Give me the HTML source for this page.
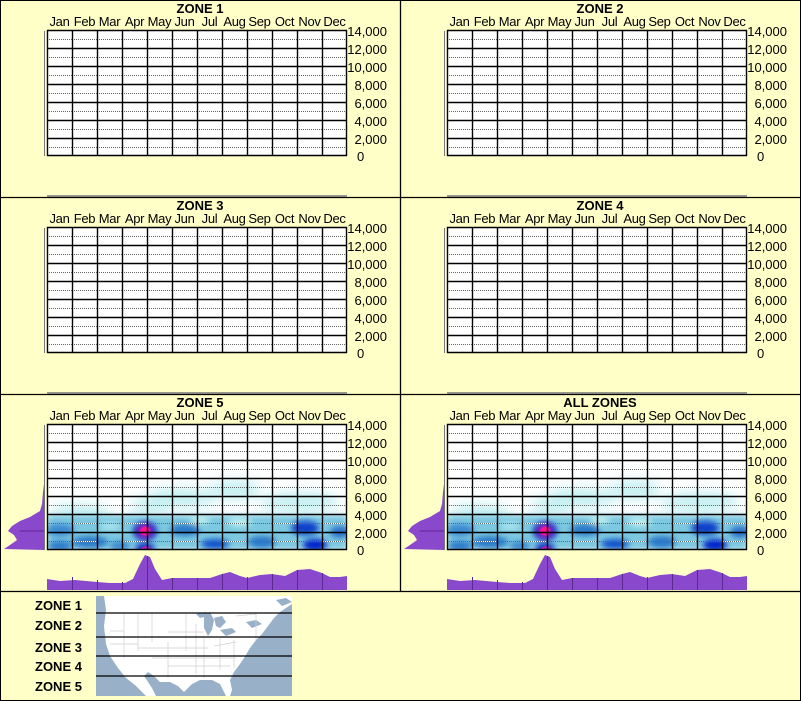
<!DOCTYPE html>
<html><head><meta charset="utf-8"><style>
body{margin:0;width:801px;height:701px;background:#ffffc8;position:relative;overflow:hidden;font-family:"Liberation Sans",Arial,sans-serif}
.p{position:absolute;width:400px;height:197px;box-sizing:border-box}
.t{position:absolute;left:0;width:400px;top:1px;text-align:center;font-weight:bold;font-size:13px;color:#000}
.m{position:absolute;top:14px;font-size:13px;color:#000;width:25px;text-align:center;white-space:nowrap;letter-spacing:-0.3px}
.y{position:absolute;left:338px;width:49px;text-align:right;font-size:13px;color:#000;line-height:13px}
svg{position:absolute;left:0;top:0}
.z{position:absolute;left:35px;font-weight:bold;font-size:13px}
</style></head><body>
<svg width="801" height="701" style="z-index:0">
<defs>
<pattern id="g" x="47" y="30" width="25" height="18" patternUnits="userSpaceOnUse">
<line x1="0" y1="9.5" x2="25" y2="9.5" stroke="#666" stroke-width="1" stroke-dasharray="1,1"/>
</pattern>
<filter id="bl" x="-50%" y="-50%" width="200%" height="200%"><feGaussianBlur stdDeviation="3"/></filter>
<filter id="bl2" x="-50%" y="-50%" width="200%" height="200%"><feGaussianBlur stdDeviation="6"/></filter>
<clipPath id="cl"><rect x="47" y="30" width="300" height="126"/></clipPath>
<g id="grid">
<rect x="47" y="30" width="300" height="126" fill="#fff"/>
</g>
<g id="lines">
<rect x="47" y="30" width="300" height="126" fill="url(#g)"/>
<path d="M47.5 30V156M72.5 30V156M97.5 30V156M122.5 30V156M147.5 30V156M172.5 30V156M197.5 30V156M222.5 30V156M247.5 30V156M272.5 30V156M297.5 30V156M322.5 30V156M346.5 30V156M47 30.5H347M47 48.5H347M47 66.5H347M47 84.5H347M47 102.5H347M47 120.5H347M47 138.5H347M47 155.5H347" stroke="#000" stroke-width="1.4" fill="none"/>
<line x1="44.5" y1="31" x2="44.5" y2="156" stroke="#777" stroke-width="1"/>
</g>
<g id="heat">
<g clip-path="url(#cl)">
<g filter="url(#bl2)" fill="#bdeef0" opacity="0.9">
<ellipse cx="80" cy="118" rx="30" ry="8"/><ellipse cx="180" cy="104" rx="35" ry="10"/><ellipse cx="235" cy="96" rx="25" ry="10"/><ellipse cx="300" cy="108" rx="40" ry="10"/><ellipse cx="150" cy="112" rx="20" ry="8"/>
</g>
<rect x="47" y="121" width="300" height="35" fill="#7cc8e0" filter="url(#bl)"/>
<g filter="url(#bl)">
<ellipse cx="60" cy="136" rx="14" ry="6" fill="#3a88d0"/>
<ellipse cx="90" cy="148" rx="18" ry="6" fill="#2a78c8"/>
<ellipse cx="60" cy="152" rx="12" ry="5" fill="#2a78c8"/>
<ellipse cx="120" cy="152" rx="10" ry="5" fill="#3a88d0"/>
<ellipse cx="145" cy="137" rx="12" ry="9" fill="#1030c0"/>
<ellipse cx="145" cy="154" rx="10" ry="5" fill="#1030c0"/>
<ellipse cx="185" cy="136" rx="15" ry="6" fill="#2a78c8"/>
<ellipse cx="215" cy="150" rx="14" ry="5" fill="#1050c8"/>
<ellipse cx="240" cy="128" rx="12" ry="5" fill="#b8eef0"/>
<ellipse cx="262" cy="148" rx="14" ry="6" fill="#2a78c8"/>
<ellipse cx="305" cy="134" rx="14" ry="7" fill="#0840c8"/>
<ellipse cx="315" cy="151" rx="12" ry="6" fill="#0020c8"/>
<ellipse cx="340" cy="138" rx="10" ry="6" fill="#2a70c8"/>
<ellipse cx="200" cy="126" rx="10" ry="4" fill="#c0f0f0"/>
<ellipse cx="110" cy="132" rx="10" ry="4" fill="#a8e4ec"/>
</g>
<ellipse cx="145" cy="137" rx="8" ry="7" fill="#a020c0" filter="url(#bl)"/>
<ellipse cx="145" cy="137" rx="5" ry="4.5" fill="#ff1090"/>
<ellipse cx="146" cy="155" rx="5" ry="3" fill="#b020c0"/>
<path d="M47 129.5H347M47 147.5H347" stroke="#fff" stroke-width="1" stroke-dasharray="1,1"/>
</g>
<polygon fill="#8a48cc" points="44,90 43,98 42,110 40,117 30,123 20,127 12,132 8,137 14,141 17,146 10,151 4,155 44,156"/>
<polygon fill="#8a48cc" points="47,196 47,185 60,187 75,186 97,188 110,189 125,189 133,185 140,170 145,161 150,163 155,175 162,186 172,184 197,184 210,184 222,180 230,178 240,182 247,184 260,181 272,180 285,182 297,176 310,175 322,179 330,183 340,183 347,182 347,196"/>
<path d="M72.5 183V196M97.5 186V196M122.5 188V196M147.5 162V196M172.5 184V196M197.5 184V196M222.5 180V196M247.5 183V196M272.5 180V196M297.5 176V196M322.5 179V196M19.5 137H44" stroke="#5a2a90" stroke-width="1"/>
</g>
</defs>
<rect x="0.5" y="0.5" width="800" height="700" fill="none" stroke="#000"/>
<path d="M400.5 0V591M0 197.5H801M0 394.5H801M0 591.5H801" stroke="#000" stroke-width="1.3"/>
<g><use href="#grid"/><use href="#lines"/><line x1="47" y1="196" x2="347" y2="196" stroke="#777" stroke-width="1.5"/></g>
<g transform="translate(400,0)"><use href="#grid"/><use href="#lines"/><line x1="47" y1="196" x2="347" y2="196" stroke="#777" stroke-width="1.5"/></g>
<g transform="translate(0,197)"><use href="#grid"/><use href="#lines"/><line x1="47" y1="196" x2="347" y2="196" stroke="#777" stroke-width="1.5"/></g>
<g transform="translate(400,197)"><use href="#grid"/><use href="#lines"/><line x1="47" y1="196" x2="347" y2="196" stroke="#777" stroke-width="1.5"/></g>
<g transform="translate(0,394)"><use href="#grid"/><use href="#heat"/><use href="#lines"/></g>
<g transform="translate(400,394)"><use href="#grid"/><use href="#heat"/><use href="#lines"/></g>
<g transform="translate(96,596)">
<rect width="196" height="100" fill="#98b0c8"/>
<path fill="#fff" d="M8,0 L196,0 L196,8 L190,12 L184,16 L178,22 L172,30 L166,38 L160,44 L154,52 L148,62 L144,68 L138,76 L134,84 L136,94 L134,100 L130,100 L124,88 L116,84 L104,84 L96,88 L88,96 L82,90 L74,86 L64,86 L58,80 L52,76 L48,80 L56,92 L60,100 L50,100 L40,90 L30,82 L22,72 L14,60 L10,48 L8,30 L10,14 Z"/>
<path fill="#98b0c8" d="M108,18 L114,16 L118,24 L116,34 L112,40 L108,32 Z M118,22 L126,20 L130,26 L124,32 L120,30 Z M124,34 L136,32 L140,36 L130,40 Z M100,18 L110,16 L112,20 L104,22 Z M150,26 L160,24 L166,28 L156,32 Z M180,4 L190,2 L196,6 L186,10 Z"/>
<path fill="none" stroke="#d0d0d0" stroke-width="0.7" d="M10,17H110M28,17V62M42,17V55M56,17V46M72,46V82M90,17V55M100,28V78M72,36H108M42,52H112M56,62H140M72,70H134M108,42V82M124,42V74M138,44V72M118,50L140,46M14,35H28M14,48H42M140,20L160,18V44"/>
<path d="M0,17H196M0,41H196M0,60H196M0,80H196" stroke="#000" stroke-width="1.3"/>
</g>
</svg>

<div class="p" style="left:0;top:0"><div class="t">ZONE 1</div></div>
<div class="p" style="left:400px;top:0"><div class="t">ZONE 2</div></div>
<div class="p" style="left:0;top:197px"><div class="t">ZONE 3</div></div>
<div class="p" style="left:400px;top:197px"><div class="t">ZONE 4</div></div>
<div class="p" style="left:0;top:394px"><div class="t">ZONE 5</div></div>
<div class="p" style="left:400px;top:394px"><div class="t">ALL ZONES</div></div>

<div class="p" style="left:0;top:0"><div class="m" style="left:47px">Jan</div><div class="m" style="left:72px">Feb</div><div class="m" style="left:97px">Mar</div><div class="m" style="left:122px">Apr</div><div class="m" style="left:147px">May</div><div class="m" style="left:172px">Jun</div><div class="m" style="left:197px">Jul</div><div class="m" style="left:222px">Aug</div><div class="m" style="left:247px">Sep</div><div class="m" style="left:272px">Oct</div><div class="m" style="left:297px">Nov</div><div class="m" style="left:322px">Dec</div><div class="y" style="top:25px">14,000</div><div class="y" style="top:43px">12,000</div><div class="y" style="top:61px">10,000</div><div class="y" style="top:79px">8,000</div><div class="y" style="top:97px">6,000</div><div class="y" style="top:115px">4,000</div><div class="y" style="top:133px">2,000</div><div class="y" style="top:150px;left:350px;width:auto;text-align:left;padding-left:7px">0</div></div>
<div class="p" style="left:400px;top:0"><div class="m" style="left:47px">Jan</div><div class="m" style="left:72px">Feb</div><div class="m" style="left:97px">Mar</div><div class="m" style="left:122px">Apr</div><div class="m" style="left:147px">May</div><div class="m" style="left:172px">Jun</div><div class="m" style="left:197px">Jul</div><div class="m" style="left:222px">Aug</div><div class="m" style="left:247px">Sep</div><div class="m" style="left:272px">Oct</div><div class="m" style="left:297px">Nov</div><div class="m" style="left:322px">Dec</div><div class="y" style="top:25px">14,000</div><div class="y" style="top:43px">12,000</div><div class="y" style="top:61px">10,000</div><div class="y" style="top:79px">8,000</div><div class="y" style="top:97px">6,000</div><div class="y" style="top:115px">4,000</div><div class="y" style="top:133px">2,000</div><div class="y" style="top:150px;left:350px;width:auto;text-align:left;padding-left:7px">0</div></div>
<div class="p" style="left:0;top:197px"><div class="m" style="left:47px">Jan</div><div class="m" style="left:72px">Feb</div><div class="m" style="left:97px">Mar</div><div class="m" style="left:122px">Apr</div><div class="m" style="left:147px">May</div><div class="m" style="left:172px">Jun</div><div class="m" style="left:197px">Jul</div><div class="m" style="left:222px">Aug</div><div class="m" style="left:247px">Sep</div><div class="m" style="left:272px">Oct</div><div class="m" style="left:297px">Nov</div><div class="m" style="left:322px">Dec</div><div class="y" style="top:25px">14,000</div><div class="y" style="top:43px">12,000</div><div class="y" style="top:61px">10,000</div><div class="y" style="top:79px">8,000</div><div class="y" style="top:97px">6,000</div><div class="y" style="top:115px">4,000</div><div class="y" style="top:133px">2,000</div><div class="y" style="top:150px;left:350px;width:auto;text-align:left;padding-left:7px">0</div></div>
<div class="p" style="left:400px;top:197px"><div class="m" style="left:47px">Jan</div><div class="m" style="left:72px">Feb</div><div class="m" style="left:97px">Mar</div><div class="m" style="left:122px">Apr</div><div class="m" style="left:147px">May</div><div class="m" style="left:172px">Jun</div><div class="m" style="left:197px">Jul</div><div class="m" style="left:222px">Aug</div><div class="m" style="left:247px">Sep</div><div class="m" style="left:272px">Oct</div><div class="m" style="left:297px">Nov</div><div class="m" style="left:322px">Dec</div><div class="y" style="top:25px">14,000</div><div class="y" style="top:43px">12,000</div><div class="y" style="top:61px">10,000</div><div class="y" style="top:79px">8,000</div><div class="y" style="top:97px">6,000</div><div class="y" style="top:115px">4,000</div><div class="y" style="top:133px">2,000</div><div class="y" style="top:150px;left:350px;width:auto;text-align:left;padding-left:7px">0</div></div>
<div class="p" style="left:0;top:394px"><div class="m" style="left:47px">Jan</div><div class="m" style="left:72px">Feb</div><div class="m" style="left:97px">Mar</div><div class="m" style="left:122px">Apr</div><div class="m" style="left:147px">May</div><div class="m" style="left:172px">Jun</div><div class="m" style="left:197px">Jul</div><div class="m" style="left:222px">Aug</div><div class="m" style="left:247px">Sep</div><div class="m" style="left:272px">Oct</div><div class="m" style="left:297px">Nov</div><div class="m" style="left:322px">Dec</div><div class="y" style="top:25px">14,000</div><div class="y" style="top:43px">12,000</div><div class="y" style="top:61px">10,000</div><div class="y" style="top:79px">8,000</div><div class="y" style="top:97px">6,000</div><div class="y" style="top:115px">4,000</div><div class="y" style="top:133px">2,000</div><div class="y" style="top:150px;left:350px;width:auto;text-align:left;padding-left:7px">0</div></div>
<div class="p" style="left:400px;top:394px"><div class="m" style="left:47px">Jan</div><div class="m" style="left:72px">Feb</div><div class="m" style="left:97px">Mar</div><div class="m" style="left:122px">Apr</div><div class="m" style="left:147px">May</div><div class="m" style="left:172px">Jun</div><div class="m" style="left:197px">Jul</div><div class="m" style="left:222px">Aug</div><div class="m" style="left:247px">Sep</div><div class="m" style="left:272px">Oct</div><div class="m" style="left:297px">Nov</div><div class="m" style="left:322px">Dec</div><div class="y" style="top:25px">14,000</div><div class="y" style="top:43px">12,000</div><div class="y" style="top:61px">10,000</div><div class="y" style="top:79px">8,000</div><div class="y" style="top:97px">6,000</div><div class="y" style="top:115px">4,000</div><div class="y" style="top:133px">2,000</div><div class="y" style="top:150px;left:350px;width:auto;text-align:left;padding-left:7px">0</div></div>

<div class="z" style="top:598px">ZONE 1</div>
<div class="z" style="top:618px">ZONE 2</div>
<div class="z" style="top:640px">ZONE 3</div>
<div class="z" style="top:659px">ZONE 4</div>
<div class="z" style="top:679px">ZONE 5</div>
</body></html>
